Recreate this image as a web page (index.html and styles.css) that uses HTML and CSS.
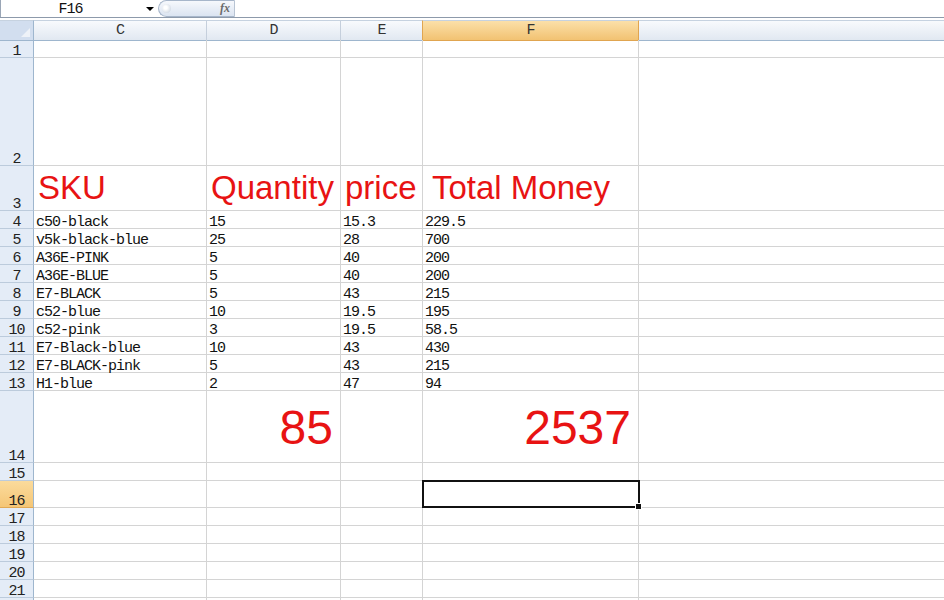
FILE: index.html
```html
<!DOCTYPE html>
<html lang="en">
<head>
    <meta charset="UTF-8">
    <meta name="viewport" content="width=device-width, initial-scale=1.0">
    <title>Sheet1</title>
    <link rel="stylesheet" href="styles.css">
</head>
<body>

<!-- Name box + formula bar -->
<div class="formula-bar">
    <div class="name-box">F16</div>
    <div class="name-drop"><span class="arrow"></span></div>
    <div class="fx-box"><span class="grip"></span><span class="fx">fx</span></div>
    <div class="formula-input"></div>
</div>

<div class="sheet">
    <div class="row col-heads">
        <div class="corner"><span class="corner-tri"></span></div>
        <div class="ch">C</div>
        <div class="ch">D</div>
        <div class="ch">E</div>
        <div class="ch active">F</div>
        <div class="ch rest"></div>
    </div>

    <div class="row"><div class="rh">1</div><div class="c"></div><div class="c"></div><div class="c"></div><div class="c"></div><div class="c last"></div></div>
    <div class="row r2"><div class="rh">2</div><div class="c"></div><div class="c"></div><div class="c"></div><div class="c"></div><div class="c last"></div></div>
    <div class="row r3">
        <div class="rh">3</div>
        <div class="c big">SKU</div>
        <div class="c big">Quantity</div>
        <div class="c big">price</div>
        <div class="c big indent">Total Money</div>
        <div class="c last"></div>
    </div>

    <div class="row"><div class="rh">4</div><div class="c">c50-black</div><div class="c">15</div><div class="c">15.3</div><div class="c">229.5</div><div class="c last"></div></div>
    <div class="row"><div class="rh">5</div><div class="c">v5k-black-blue</div><div class="c">25</div><div class="c">28</div><div class="c">700</div><div class="c last"></div></div>
    <div class="row"><div class="rh">6</div><div class="c">A36E-PINK</div><div class="c">5</div><div class="c">40</div><div class="c">200</div><div class="c last"></div></div>
    <div class="row"><div class="rh">7</div><div class="c">A36E-BLUE</div><div class="c">5</div><div class="c">40</div><div class="c">200</div><div class="c last"></div></div>
    <div class="row"><div class="rh">8</div><div class="c">E7-BLACK</div><div class="c">5</div><div class="c">43</div><div class="c">215</div><div class="c last"></div></div>
    <div class="row"><div class="rh">9</div><div class="c">c52-blue</div><div class="c">10</div><div class="c">19.5</div><div class="c">195</div><div class="c last"></div></div>
    <div class="row"><div class="rh">10</div><div class="c">c52-pink</div><div class="c">3</div><div class="c">19.5</div><div class="c">58.5</div><div class="c last"></div></div>
    <div class="row"><div class="rh">11</div><div class="c">E7-Black-blue</div><div class="c">10</div><div class="c">43</div><div class="c">430</div><div class="c last"></div></div>
    <div class="row"><div class="rh">12</div><div class="c">E7-BLACK-pink</div><div class="c">5</div><div class="c">43</div><div class="c">215</div><div class="c last"></div></div>
    <div class="row"><div class="rh">13</div><div class="c">H1-blue</div><div class="c">2</div><div class="c">47</div><div class="c">94</div><div class="c last"></div></div>

    <div class="row r14">
        <div class="rh">14</div>
        <div class="c"></div>
        <div class="c total">85</div>
        <div class="c"></div>
        <div class="c total">2537</div>
        <div class="c last"></div>
    </div>
    <div class="row"><div class="rh">15</div><div class="c"></div><div class="c"></div><div class="c"></div><div class="c"></div><div class="c last"></div></div>
    <div class="row r16"><div class="rh active">16</div><div class="c"></div><div class="c"></div><div class="c"></div><div class="c"></div><div class="c last"></div></div>
    <div class="row"><div class="rh">17</div><div class="c"></div><div class="c"></div><div class="c"></div><div class="c"></div><div class="c last"></div></div>
    <div class="row"><div class="rh">18</div><div class="c"></div><div class="c"></div><div class="c"></div><div class="c"></div><div class="c last"></div></div>
    <div class="row"><div class="rh">19</div><div class="c"></div><div class="c"></div><div class="c"></div><div class="c"></div><div class="c last"></div></div>
    <div class="row"><div class="rh">20</div><div class="c"></div><div class="c"></div><div class="c"></div><div class="c"></div><div class="c last"></div></div>
    <div class="row"><div class="rh">21</div><div class="c"></div><div class="c"></div><div class="c"></div><div class="c"></div><div class="c last"></div></div>
    <!-- next row only peeks in at the bottom edge -->
    <div class="row"><div class="rh"></div><div class="c"></div><div class="c"></div><div class="c"></div><div class="c"></div><div class="c last"></div></div>

    <!-- active cell F16 -->
    <div class="selection"></div>
    <div class="fill-handle"></div>
</div>

</body>
</html>
```

FILE: styles.css
```css
html, body {
    margin: 0;
    padding: 0;
    background: #fff;
    overflow: hidden;
}
body {
    width: 944px;
    height: 600px;
    font-family: "Liberation Mono", "DejaVu Sans Mono", monospace;
    font-size: 15px;
    letter-spacing: -1px;
    color: #111;
}

/* Formula bar */
.formula-bar {
    display: flex;
    height: 17px;
    border-bottom: 1px solid #8d9aab;
    margin-bottom: 2px;
}
.name-box {
    width: 140px;
    border-left: 1px solid #9aa6b6;
    text-align: center;
    line-height: 17px;
    padding-top: 1px;
    box-sizing: border-box;
}
.name-drop {
    width: 18px;
    position: relative;
}
.arrow {
    position: absolute;
    left: 6px;
    top: 7px;
    border-left: 4px solid transparent;
    border-right: 4px solid transparent;
    border-top: 4px solid #000;
}
.fx-box {
    width: 77px;
    height: 17px;
    box-sizing: border-box;
    border: 1px solid #a7b6ca;
    border-right-color: #b8c4d3;
    border-radius: 9px 0 0 9px;
    background: linear-gradient(#f6f8fc, #dbe4f1);
    display: flex;
    align-items: center;
    justify-content: space-between;
    padding: 0 4px 0 3px;
}
.grip {
    width: 9px;
    height: 9px;
    border-radius: 50%;
    background: radial-gradient(circle at 40% 40%, #ffffff 20%, #c7d1de 90%);
}
.fx {
    font-family: "Liberation Serif", serif;
    font-style: italic;
    font-weight: bold;
    font-size: 12px;
    letter-spacing: 0;
    color: #6b6b6b;
}
.formula-input {
    flex: 1;
}

/* Grid */
.sheet {
    position: relative;
}
.row {
    display: grid;
    grid-template-columns: 34px 173px 134px 82px 216px 1fr;
    height: 18px;
}
.row.r2 { height: 108px; }
.row.r3 { height: 45px; }
.row.r14 { height: 72px; }
.row.r16 { height: 27px; }

.c, .rh, .ch, .corner {
    box-sizing: border-box;
    display: flex;
    align-items: flex-end;
    white-space: nowrap;
}
.c {
    border-right: 1px solid #d4d4d4;
    border-bottom: 1px solid #d4d4d4;
    padding-left: 2px;
    line-height: 11px;
}
.c.last {
    border-right: none;
}
.rh {
    background: #e4ecf7;
    border-right: 1px solid #9eb6ce;
    border-bottom: 1px solid #bccbdc;
    justify-content: center;
    line-height: 11px;
    color: #222;
}
.rh.active {
    background: linear-gradient(#fbdb9c, #f5c676);
    border-bottom-color: #e1a955;
}

/* Column headings */
.col-heads {
    height: 20px;
}
.col-heads > div {
    border-top: 1px solid #c6d2e0;
    border-bottom: 1px solid #9eb6ce;
}
.corner {
    background: #d2deef;
    border-right: 1px solid #9eb6ce;
    position: relative;
}
.corner-tri {
    position: absolute;
    right: 3px;
    bottom: 3px;
    border-left: 9px solid transparent;
    border-bottom: 9px solid #eef2f8;
}
.ch {
    background: linear-gradient(#f8fafd, #e1e8f1);
    border-right: 1px solid #c5cfdc;
    justify-content: center;
    align-items: center;
    line-height: 18px;
    padding-top: 1px;
    color: #333;
}
.ch.active {
    background: linear-gradient(#fbe0a9, #f2c272);
    border-right-color: #e0a550;
    border-bottom-color: #e0a550;
    border-left: 1px solid #e0a550;
    margin-left: -1px;
}
.ch.rest {
    border-right: none;
}

/* Large red labels and totals */
.big {
    font-family: "Liberation Sans", Arial, sans-serif;
    font-size: 33px;
    letter-spacing: 0;
    line-height: 33px;
    color: #e81313;
    padding: 0 0 6px 4px;
}
.big.indent {
    padding-left: 9px;
}
.total {
    font-family: "Liberation Sans", Arial, sans-serif;
    font-size: 48px;
    letter-spacing: 0;
    line-height: 48px;
    color: #e81313;
    justify-content: flex-end;
    padding: 0 7px 10px 0;
}

/* Active cell outline */
.selection {
    position: absolute;
    left: 422px;
    top: 460px;
    width: 218px;
    height: 28px;
    box-sizing: border-box;
    border: 2px solid #111;
}
.fill-handle {
    position: absolute;
    left: 636px;
    top: 484px;
    width: 5px;
    height: 5px;
    background: #111;
    outline: 1px solid #fff;
}
```
